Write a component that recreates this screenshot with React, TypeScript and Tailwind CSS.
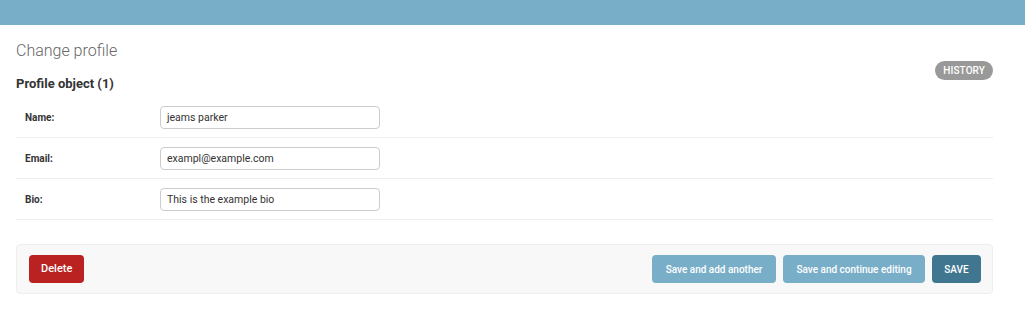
import React from "react";

const fields = [
  { label: "Name:", value: "jeams parker" },
  { label: "Email:", value: "exampl@example.com" },
  { label: "Bio:", value: "This is the example bio" },
];

export default function App() {
  return (
    <div className="min-h-[318px] bg-white text-[#333]" style={{ fontFamily: "Roboto, 'Liberation Sans', sans-serif" }}>
      <div className="h-[25px] bg-[#79aec8]" />
      <div className="pl-4 pr-[32px]">
        <h1 className="mt-[14px] h-[24px] text-[16px] font-light leading-[24px] text-[#666]">Change profile</h1>
        <div className="flex items-start justify-between">
          <h2 className="mt-[12px] text-[13px] font-bold leading-[18px] text-[#333]">Profile object (1)</h2>
          <a className="mt-[-2px] flex h-[19px] items-center rounded-full bg-[#999] px-[8px] text-[10px] font-medium uppercase tracking-[0.1px] text-white">
            History
          </a>
        </div>
        <div className="mt-[4px]">
          {fields.map((f) => (
            <div key={f.label} className="flex items-center border-b border-[#eee] pl-[9px] pt-[9px] pb-[8px]">
              <label className="w-[135px] text-[10px] font-bold text-[#333]">{f.label}</label>
              <div className="flex h-[23px] w-[220px] items-center rounded-[4px] border border-[#ccc] px-[6px] text-[10.5px] text-[#333]">
                {f.value}
              </div>
            </div>
          ))}
        </div>
        <div className="mt-[24px] flex items-center justify-between rounded-[4px] border border-[#eee] bg-[#f8f8f8] pl-[12px] pr-[11px] py-[10px]">
          <button className="h-[28px] rounded-[4px] bg-[#ba2121] px-[12px] text-[11px] font-medium text-white">Delete</button>
          <div className="flex gap-[7px]">
            <button className="h-[28px] w-[124px] rounded-[4px] bg-[#79aec8] text-[10px] font-medium text-white">Save and add another</button>
            <button className="h-[28px] w-[142px] rounded-[4px] bg-[#79aec8] text-[10px] font-medium text-white">Save and continue editing</button>
            <button className="h-[28px] w-[49px] rounded-[4px] bg-[#417690] text-[10px] font-medium text-white">SAVE</button>
          </div>
        </div>
      </div>
    </div>
  );
}
